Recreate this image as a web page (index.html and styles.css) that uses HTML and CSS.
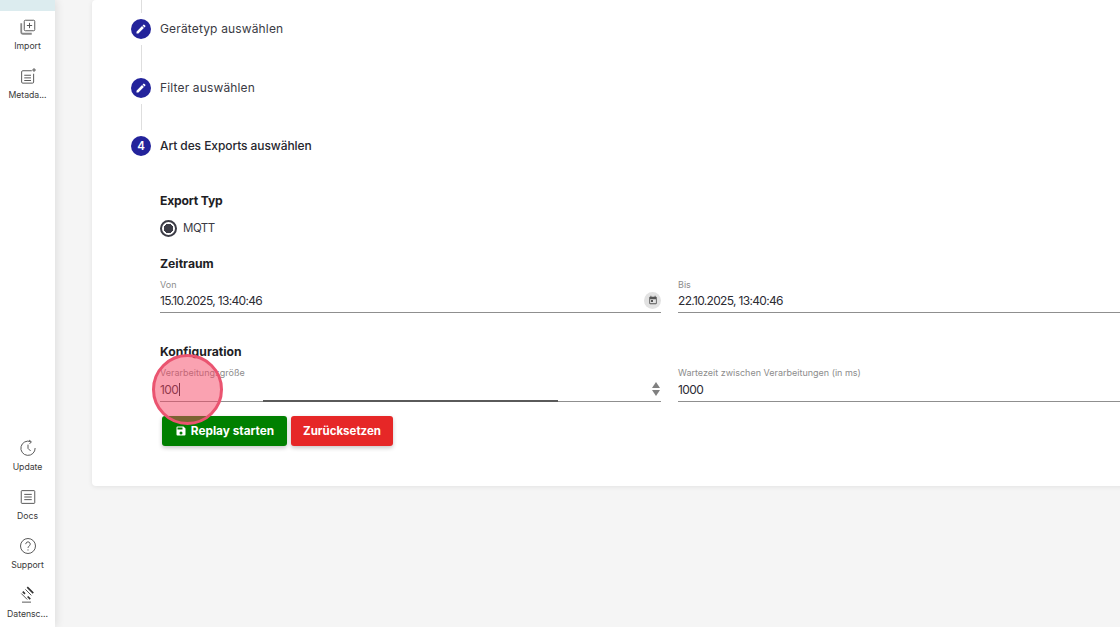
FILE: index.html
```html
<!DOCTYPE html>
<html lang="de">
<head>
<meta charset="utf-8">
<title>Replay</title>
<link rel="stylesheet" href="styles.css">
</head>
<body>
<div class="app">
  <nav class="sidebar">
    <div class="active-tile"></div>
    <div class="nav-top">
      <a class="nav-item"><svg class="nav-icon" viewBox="0 0 24 24"><path d="M3 7v12a2 2 0 0 0 2 2h12" fill="none" stroke="#888" stroke-width="2.400"/><rect x="7" y="3" width="14" height="14" rx="1.500"/><path d="M14 6.500v7M10.500 10h7"/></svg><span>Import</span></a>
      <a class="nav-item"><svg class="nav-icon" viewBox="0 0 24 24"><path d="M17 5H5a1.500 1.500 0 0 0-1.500 1.500V20A1.500 1.500 0 0 0 5 21.500h13a1.500 1.500 0 0 0 1.500-1.500V9"/><path d="M7 11h9M7 14.500h9M7 18h9M20 1.500v5M17.500 4h5"/></svg><span>Metada...</span></a>
    </div>
    <div class="nav-bottom">
      <a class="nav-item"><svg class="nav-icon" viewBox="0 0 24 24"><path d="M15.500 3.500A9.500 9.500 0 1 0 21.500 12"/><path d="M13.500 1.500l3 2.200-2.400 2.800M12 7.500v5l3.500 3.500"/></svg><span>Update</span></a>
      <a class="nav-item"><svg class="nav-icon" viewBox="0 0 24 24"><rect x="3" y="3.500" width="18" height="17" rx="1"/><path d="M7 8.500h10M7 12h10M7 15.500h10"/></svg><span>Docs</span></a>
      <a class="nav-item"><svg class="nav-icon" viewBox="0 0 24 24"><circle cx="12" cy="12" r="10"/><path d="M9 9.500a3 3 0 1 1 4.500 2.600c-1 .6-1.500 1.200-1.500 2.400M12 16.500v1.500"/></svg><span>Support</span></a>
      <a class="nav-item"><svg class="nav-icon" viewBox="0 0 24 24"><path d="M4 21.500h12"/><path class="thick" d="M11 1.500l8 8M5 7.500l3 3M11.500 14l3.500 3.500"/><path d="M8.500 4.500l8 8M3 10l8 8"/></svg><span>Datensc...</span></a>
    </div>
  </nav>

  <main class="main">
    <section class="card">
      <div class="line line-first"></div>
      <div class="step"><span class="badge"><svg viewBox="0 0 24 24"><path d="M3 17.250V21h3.750L17.810 9.940l-3.750-3.750L3 17.250zM20.710 7.040a1 1 0 0 0 0-1.410l-2.340-2.340a1 1 0 0 0-1.410 0l-1.830 1.830 3.750 3.750 1.830-1.830z"/></svg></span><span class="step-label">Gerätetyp auswählen</span></div>
      <div class="line"></div>
      <div class="step"><span class="badge"><svg viewBox="0 0 24 24"><path d="M3 17.250V21h3.750L17.810 9.940l-3.750-3.750L3 17.250zM20.710 7.040a1 1 0 0 0 0-1.410l-2.340-2.340a1 1 0 0 0-1.410 0l-1.830 1.830 3.750 3.750 1.830-1.830z"/></svg></span><span class="step-label">Filter auswählen</span></div>
      <div class="line"></div>
      <div class="step"><span class="badge">4</span><span class="step-label current">Art des Exports auswählen</span></div>

      <div class="content">
        <h3 class="heading h-type">Export Typ</h3>
        <label class="radio"><span class="radio-dot"></span>MQTT</label>
        <h3 class="heading h-time">Zeitraum</h3>
        <div class="fields fields-time">
          <div class="field">
            <label>Von</label>
            <div class="value-row"><span>15.10.2025, 13:40:46</span><span class="cal"><svg viewBox="0 0 24 24"><path d="M19 4h-1V2h-2v2H8V2H6v2H5a2 2 0 0 0-2 2v14a2 2 0 0 0 2 2h14a2 2 0 0 0 2-2V6a2 2 0 0 0-2-2zm0 16H5V10h14v10zM7 12h5v5H7z"/></svg></span></div>
          </div>
          <div class="field">
            <label>Bis</label>
            <div class="value-row"><span>22.10.2025, 13:40:46</span></div>
          </div>
        </div>
        <h3 class="heading h-conf">Konfiguration</h3>
        <div class="fields fields-conf">
          <div class="field focused">
            <label>Verarbeitungsgröße</label>
            <div class="value-row"><span>100<i class="caret"></i></span><span class="spin"><b class="up"></b><b class="down"></b></span></div>
            <div class="focus-line"></div>
          </div>
          <div class="field">
            <label>Wartezeit zwischen Verarbeitungen (in ms)</label>
            <div class="value-row"><span>1000</span></div>
          </div>
        </div>
        <div class="actions">
          <button class="btn green"><svg viewBox="0 0 24 24"><path d="M17 3H5a2 2 0 0 0-2 2v14a2 2 0 0 0 2 2h14a2 2 0 0 0 2-2V7l-4-4zm-5 16a3 3 0 1 1 0-6 3 3 0 0 1 0 6zm3-10H5V5h10v4z"/></svg>Replay starten</button>
          <button class="btn red">Zurücksetzen</button>
        </div>
      </div>
    </section>
  </main>
  <div class="click-marker"></div>
</div>
</body>
</html>
```
FILE: styles.css
```css
* { box-sizing: border-box; }
html, body { margin: 0; height: 100%; overflow: hidden; }
body { font-family: Inter, "Noto Sans", sans-serif; color: #27272f; background: #f5f5f5; }
.app { position: relative; display: flex; width: 1120px; height: 627px; overflow: hidden; }

.sidebar { width: 55px; flex: none; height: 627px; background: #fff; box-shadow: 2px 0 8px rgba(0,0,0,.09); display: flex; flex-direction: column; z-index: 1; }
.active-tile { height: 11px; background: #dcecef; flex: none; }
.nav-top { padding-top: 7px; display: flex; flex-direction: column; gap: 13px; }
.nav-bottom { margin-top: auto; padding-bottom: 5px; display: flex; flex-direction: column; gap: 13px; }
.nav-item { display: flex; flex-direction: column; align-items: center; height: 36px; font-size: 8.700px; line-height: 12px; color: #3a3a3a; white-space: nowrap; letter-spacing: -.03px; }
.nav-item span { margin-top: 4px; }
.nav-icon { width: 18px; height: 18px; flex: none; fill: none; stroke: #555; stroke-width: 1.300; }
.nav-icon .thick { stroke: #333; stroke-width: 2.200; }

.main { flex: 1; min-width: 0; padding-left: 37px; }
.card { width: 1100px; height: 486px; background: #fff; border-radius: 4px; box-shadow: 0 1px 5px rgba(0,0,0,.08); padding-left: 39px; display: flex; flex-direction: column; }

.step { display: flex; align-items: center; height: 20px; gap: 9px; flex: none; }
.badge { width: 20px; height: 20px; border-radius: 50%; background: #23239b; color: #fff; font-size: 11.500px; font-weight: 600; display: flex; align-items: center; justify-content: center; flex: none; }
.badge svg { width: 12px; height: 12px; fill: #fff; }
.step-label { font-size: 12px; color: #3b3b44; letter-spacing: .15px; margin-top: -1px; }
.step-label.current { color: #26262e; font-weight: 500; letter-spacing: -.08px; }
.line { width: 1px; height: 26.500px; margin: 6px 0 6px 10px; background: #dedede; flex: none; }
.line-first { height: 13px; margin-top: 0; }

.content { padding: 37px 0 0 29px; display: flex; flex-direction: column; }
.heading { margin: 0; font-size: 12.200px; line-height: 16px; font-weight: 700; color: #1e1e24; }
.h-type { letter-spacing: -.2px; }
.radio { display: flex; align-items: center; gap: 6px; height: 18px; margin-top: 10px; font-size: 11.500px; letter-spacing: -.5px; color: #3b3b44; }
.radio-dot { width: 17px; height: 17px; border-radius: 50%; border: 2px solid #3c3c46; position: relative; flex: none; background: radial-gradient(circle, #3c3c46 0 4.500px, transparent 5px); }
.h-time { margin-top: 19px; }
.h-conf { margin-top: 31px; }
.fields { display: grid; grid-template-columns: 501px 501px; column-gap: 17px; }
.fields-time { margin-top: 7px; }
.fields-conf { margin-top: 7px; }
.field { position: relative; height: 34px; border-bottom: 1px solid #8f8f8f; }
.fields-conf .field { height: 35px; }
.field label { display: block; font-size: 9px; line-height: 12px; color: #8c8c8c; }
.value-row { display: flex; align-items: center; justify-content: space-between; height: 22px; margin-top: -2px; font-size: 12px; letter-spacing: -.68px; color: #2c2c34; }
.fields-conf .value-row { margin-top: -1px; letter-spacing: -.55px; }
.cal { width: 17px; height: 17px; border-radius: 50%; background: #e2e2e2; display: flex; align-items: center; justify-content: center; }
.cal svg { width: 10px; height: 10px; fill: #555; }
.spin { width: 11px; display: flex; flex-direction: column; align-items: center; gap: 2px; }
.spin b { display: block; width: 0; height: 0; border-left: 4.500px solid transparent; border-right: 4.500px solid transparent; }
.spin .up { border-bottom: 6px solid #808080; }
.spin .down { border-top: 6px solid #808080; }
.caret { display: inline-block; width: 1px; height: 13px; background: #222; vertical-align: -2px; margin-left: 1px; }
.focus-line { position: absolute; left: 103px; bottom: -1px; width: 295px; height: 2px; background: #5a5a5a; }

.actions { display: flex; gap: 4px; margin: 14px 0 0 2px; }
.btn { height: 30px; border: 0; border-radius: 3px; display: inline-flex; align-items: center; justify-content: center; gap: 4px; font: 700 11.800px Inter, sans-serif; color: #fff; box-shadow: 0 2px 4px rgba(0,0,0,.22); padding: 0; }
.btn svg { width: 12px; height: 12px; fill: #fff; }
.green { width: 125px; background: #008000; }
.red { width: 102px; background: #e62727; font-size: 11.500px; }

.click-marker { position: absolute; left: 152px; top: 354px; width: 71px; height: 71px; border-radius: 50%; background: rgba(246, 70, 100, .5); border: 3px solid #ea5470; z-index: 2; }
```
